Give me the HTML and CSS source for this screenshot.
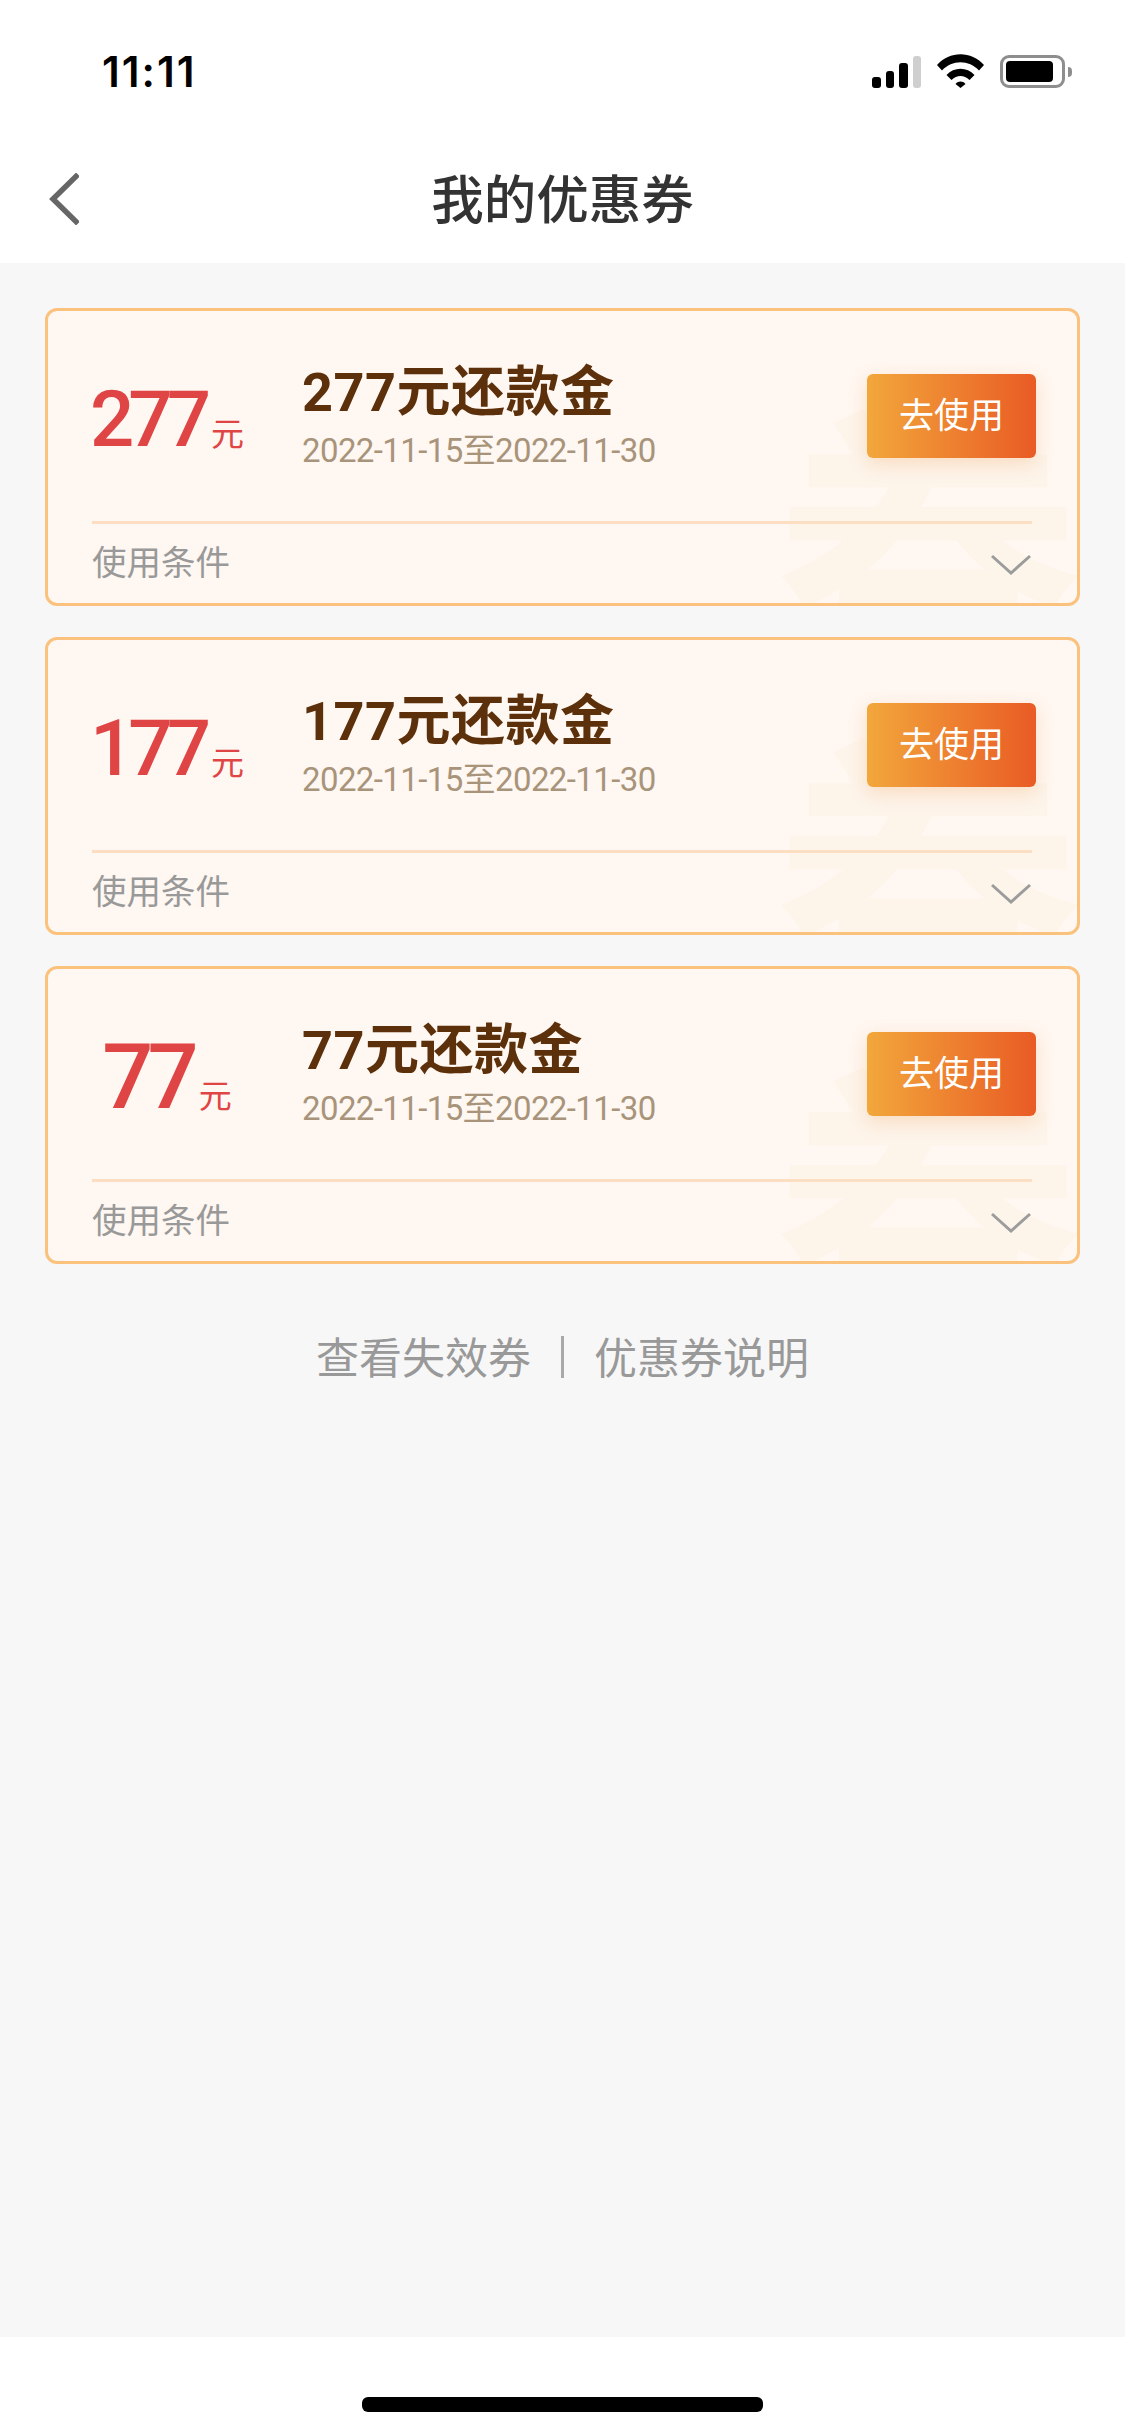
FILE: index.html
```html
<!DOCTYPE html>
<html lang="zh-CN">
<head>
<meta charset="utf-8">
<title>我的优惠券</title>
<link rel="stylesheet" href="styles.css">
</head>
<body>
<div class="page">
  <header class="top">
    <div class="status">
      <span class="time">11:11</span>
      <div class="status-icons">
        <div class="signal"><i class="b1"></i><i class="b2"></i><i class="b3"></i><i class="b4"></i></div>
        <svg class="wifi" viewBox="0 0 47 34"><path d="M0 11C12.500-3.500 34.500-3.500 47 11L42 16.500C32 5.500 15 5.500 5 16.500Z"/><path d="M9.500 21C17 12.500 30 12.500 37.500 21L32.500 26C27 20.500 20 20.500 14.500 26Z"/><path d="M18.500 30C21.500 26.800 25.500 26.800 28.500 30L23.500 34Z"/></svg>
        <div class="battery"><div class="battery-body"><div class="battery-fill"></div></div><div class="battery-nub"></div></div>
      </div>
    </div>
    <nav class="nav">
      <svg class="back" viewBox="0 0 30 52"><path d="M29 1.500L4 26L29 50.500" fill="none" stroke="#666" stroke-width="5.500"/></svg>
      <h1 class="nav-title">我的优惠券</h1>
    </nav>
  </header>

  <main class="content">
    <section class="coupon">
      <span class="watermark">券</span>
      <div class="coupon-main">
        <div class="amount"><span class="amount-num">277</span><span class="amount-unit">元</span></div>
        <div class="info">
          <div class="info-title">277元还款金</div>
          <div class="info-date">2022-11-15至2022-11-30</div>
        </div>
        <button class="use-btn">去使用</button>
      </div>
      <div class="coupon-foot">
        <span class="cond">使用条件</span>
        <svg class="chev" viewBox="0 0 40 21"><path d="M1 2L20 19L39 2" fill="none" stroke="#9c9c9c" stroke-width="3"/></svg>
      </div>
    </section>
    <section class="coupon">
      <span class="watermark">券</span>
      <div class="coupon-main">
        <div class="amount"><span class="amount-num">177</span><span class="amount-unit">元</span></div>
        <div class="info">
          <div class="info-title">177元还款金</div>
          <div class="info-date">2022-11-15至2022-11-30</div>
        </div>
        <button class="use-btn">去使用</button>
      </div>
      <div class="coupon-foot">
        <span class="cond">使用条件</span>
        <svg class="chev" viewBox="0 0 40 21"><path d="M1 2L20 19L39 2" fill="none" stroke="#9c9c9c" stroke-width="3"/></svg>
      </div>
    </section>
    <section class="coupon">
      <span class="watermark">券</span>
      <div class="coupon-main">
        <div class="amount"><span class="amount-num amount-num-lg">77</span><span class="amount-unit">元</span></div>
        <div class="info">
          <div class="info-title">77元还款金</div>
          <div class="info-date">2022-11-15至2022-11-30</div>
        </div>
        <button class="use-btn">去使用</button>
      </div>
      <div class="coupon-foot">
        <span class="cond">使用条件</span>
        <svg class="chev" viewBox="0 0 40 21"><path d="M1 2L20 19L39 2" fill="none" stroke="#9c9c9c" stroke-width="3"/></svg>
      </div>
    </section>
    <div class="links">
      <span>查看失效券</span>
      <i class="links-sep"></i>
      <span>优惠券说明</span>
    </div>
  </main>

  <footer class="home">
    <div class="home-bar"></div>
  </footer>
</div>
</body>
</html>
```

FILE: styles.css
```css
* { box-sizing: border-box; }
html, body { margin: 0; padding: 0; }
body {
  background: #fff;
  font-family: Roboto, "Noto Sans CJK SC", sans-serif;
}
.page {
  width: 1125px;
  height: 2435px;
  display: flex;
  flex-direction: column;
  overflow: hidden;
}

/* header */
.top { height: 263px; background: #fff; flex: none; }
.status {
  height: 140px;
  padding: 2px 53px 0 102px;
  display: flex;
  align-items: center;
  justify-content: space-between;
}
.time {
  font-family: Inter, sans-serif;
  font-size: 42px;
  font-weight: 600;
  color: #000;
  letter-spacing: 2px;
}
.status-icons { display: flex; align-items: flex-end; }
.signal { display: flex; align-items: flex-end; gap: 5px; width: 49px; height: 32px; margin-right: 16px; }
.signal i { display: block; width: 9px; border-radius: 3px; background: #000; }
.signal .b1 { height: 11px; }
.signal .b2 { height: 17px; }
.signal .b3 { height: 25px; }
.signal .b4 { height: 32px; background: #cfcfcf; }
.wifi { display: block; width: 47px; height: 34px; fill: #000; margin-right: 16px; }
.battery { display: flex; align-items: center; height: 33px; }
.battery-body {
  width: 65px;
  height: 33px;
  border: 3px solid #8e8e8e;
  border-radius: 9px;
  padding: 3px;
}
.battery-fill { width: 47px; height: 100%; background: #000; border-radius: 4px; }
.battery-nub { width: 4px; height: 10px; margin-left: 3px; background: #8e8e8e; border-radius: 0 4px 4px 0; }

.nav {
  position: relative;
  height: 123px;
  display: flex;
  align-items: center;
  justify-content: center;
  padding-bottom: 1px;
}
.back { position: absolute; left: 49px; top: 33px; width: 30px; height: 52px; }
.nav-title {
  margin: 0;
  font-size: 52.500px;
  line-height: 60px;
  font-weight: 500;
  color: #333;
}

/* content */
.content {
  flex: 1;
  background: #f7f7f7;
  padding: 45px 45px 0;
  display: flex;
  flex-direction: column;
  gap: 31px;
}
.coupon {
  position: relative;
  height: 298px;
  flex: none;
  background: #fff7f1;
  border: 3px solid #fbc27e;
  border-radius: 12px;
  overflow: hidden;
  padding: 0 45px 0 44px;
}
.watermark {
  position: absolute;
  left: 725px;
  top: 82px;
  font-size: 310px;
  line-height: 340px;
  font-weight: 700;
  color: #fdf4ea;
}
.coupon-main {
  position: relative;
  height: 213px;
  display: flex;
  align-items: center;
  border-bottom: 3px solid #fcdfc2;
}
.amount {
  width: 150px;
  display: flex;
  justify-content: center;
  align-items: baseline;
  gap: 6px;
  color: #e04546;
  padding-top: 8px;
}
.amount-num { font-size: 78px; line-height: 90px; font-weight: 500; letter-spacing: -6px; }
.amount-num-lg { font-size: 90px; letter-spacing: -6px; }
.amount-unit { font-size: 33px; line-height: 40px; }
.info { margin-left: 60px; flex: 1; }
.info-title { font-size: 54px; line-height: 60px; font-weight: 700; color: #5c300a; letter-spacing: 0.500px; padding-top: 1px; }
.info-date { font-size: 33px; line-height: 40px; color: #a8947a; letter-spacing: -0.600px; margin-top: 8px; }
.use-btn {
  width: 169px;
  height: 84px;
  margin-right: -4px;
  border: 0;
  padding: 0 0 7px;
  border-radius: 6px;
  background: linear-gradient(90deg, #f2a73b, #e95b25);
  box-shadow: 0 6px 18px rgba(240, 150, 70, 0.25);
  color: #fff;
  font-family: inherit;
  font-size: 35px;
}
.coupon-foot {
  position: relative;
  height: 76px;
  display: flex;
  align-items: center;
  justify-content: space-between;
}
.cond { font-size: 34.500px; line-height: 40px; color: #999; margin-top: 2px; }
.chev { display: block; width: 40px; height: 21px; margin-right: 1px; margin-top: 4px; }

.links {
  display: flex;
  justify-content: center;
  align-items: center;
  margin-top: 30px;
  height: 60px;
  font-size: 43px;
  color: #999;
}
.links-sep { display: block; width: 3px; height: 42px; margin: 3px 30px 0; background: #a8a8a8; }

/* home indicator */
.home { height: 98px; flex: none; background: #fff; padding-top: 60px; }
.home-bar { width: 401px; height: 15px; margin: 0 auto; border-radius: 6px; background: #000; }
```
